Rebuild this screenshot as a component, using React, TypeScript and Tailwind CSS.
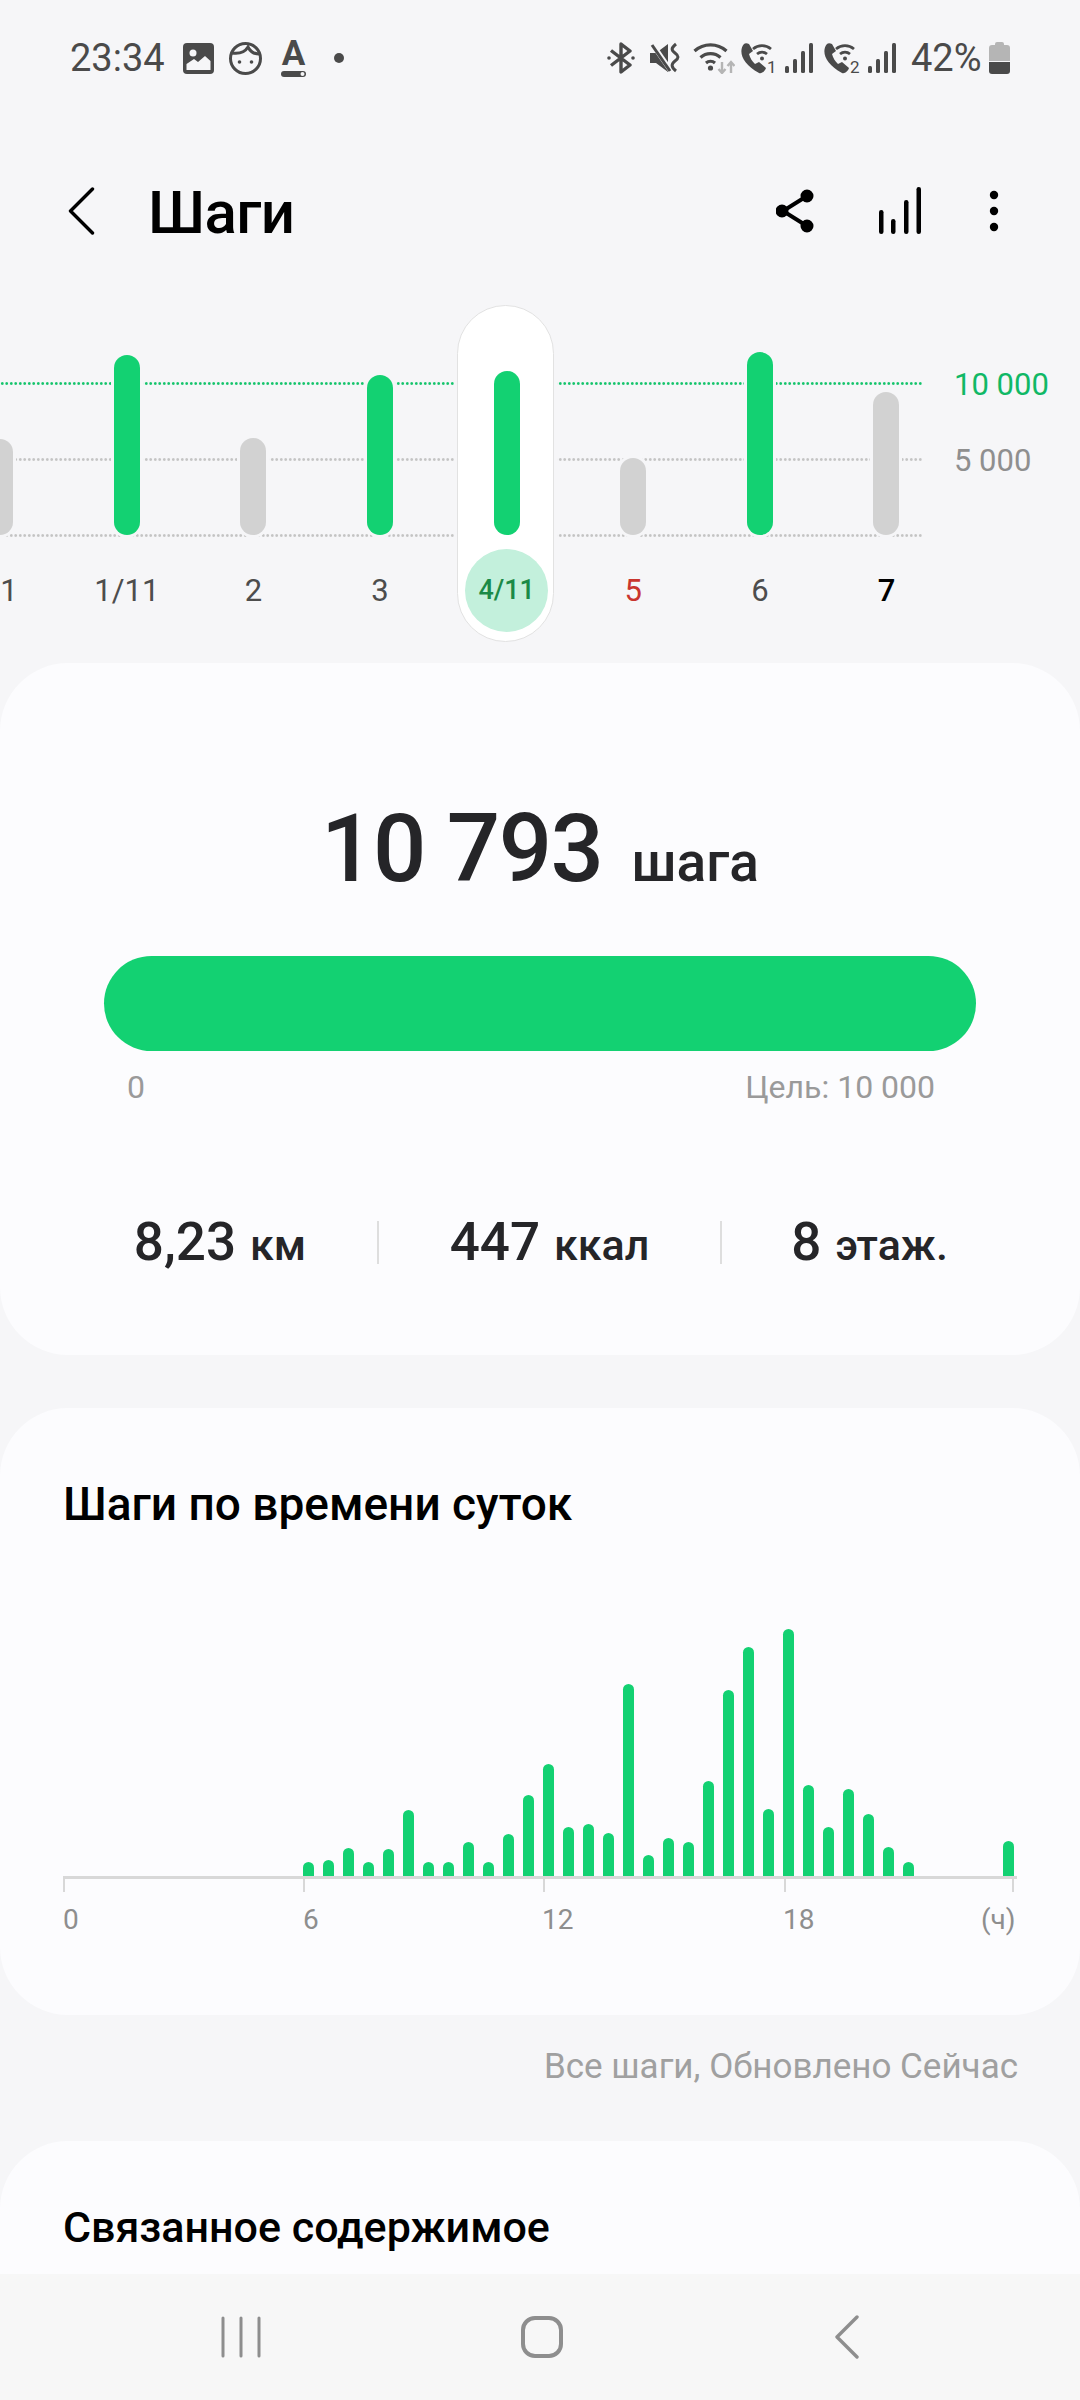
const days = [
  { label: "31", top: 439, green: false, color: "text-[#4d4d4d]" },
  { label: "1/11", top: 355, green: true, color: "text-[#4d4d4d]" },
  { label: "2", top: 438, green: false, color: "text-[#4d4d4d]" },
  { label: "3", top: 375, green: true, color: "text-[#4d4d4d]" },
  { label: "4/11", top: 371, green: true, color: "text-[#1b8a47]", active: true },
  { label: "5", top: 458, green: false, color: "text-[#c9352e]" },
  { label: "6", top: 352, green: true, color: "text-[#4d4d4d]" },
  { label: "7", top: 392, green: false, color: "text-black font-medium" },
];

// heights of the half-hour bars, in px above the axis
const hours = [
  0, 0, 0, 0, 0, 0, 0, 0, 0, 0, 0, 0, 14, 16, 28, 14, 27, 66, 14, 14, 34, 14, 42, 81, 112, 49, 52, 43, 192, 21, 38, 34,
  95, 186, 229, 67, 247, 91, 49, 87, 62, 29, 14, 0, 0, 0, 0, 35,
];

function SignalBars({ className }: { className?: string }) {
  return (
    <svg viewBox="0 0 28 30" className={className} fill="#4a4a4a">
      <rect x="0" y="23" width="4" height="7" rx="1.5" />
      <rect x="8" y="16" width="4" height="14" rx="1.5" />
      <rect x="16" y="8" width="4" height="22" rx="1.5" />
      <rect x="24" y="0" width="4" height="30" rx="1.5" />
    </svg>
  );
}

function CallWifi({ digit }: { digit: string }) {
  return (
    <svg viewBox="0 0 38 37" className="mb-[-5px] mr-[-2px] h-[37px] w-[38px]">
      <path
        d="M4 2 C-2 9 2 22 19 31 C22 32 25 29 26 26 L19 20 L15 22 C12 19 10 16 9 12 L13 9 L9 2 C7 1 5 1 4 2Z"
        fill="#4a4a4a"
      />
      <g fill="none" stroke="#4a4a4a" strokeWidth="2.8">
        <path d="M13 7 A14 14 0 0 1 31 7" />
        <path d="M17 12 A8 8 0 0 1 27 12" />
      </g>
      <circle cx="22" cy="16.5" r="2" fill="#4a4a4a" />
      <text x="27" y="31" fontSize="17" fill="#4a4a4a" fontFamily="Roboto, sans-serif">
        {digit}
      </text>
    </svg>
  );
}

function StatusBar() {
  return (
    <div className="flex h-[116px] shrink-0 items-center pl-[70px] pr-[70px] text-[38px] text-[#4a4a4a]">
      <span className="w-[113px] leading-none">23:34</span>
      <svg viewBox="0 0 31 31" className="h-[31px] w-[31px]">
        <rect width="31" height="31" rx="4" fill="#4a4a4a" />
        <circle cx="10" cy="10" r="3.5" fill="#f6f6f8" />
        <path d="M3.5 27 V21 L11 16 L15 19 L22 13 L27.5 18 V27Z" fill="#f6f6f8" />
      </svg>
      <svg viewBox="0 0 33 33" className="ml-[15px] h-[33px] w-[33px]" fill="none" stroke="#4a4a4a" strokeWidth="3">
        <circle cx="16.5" cy="16.5" r="15" />
        <path d="M3 11 C10 12 16 10 19 5 C21 9 25 12 30 12" />
        <circle cx="10.5" cy="20" r="1.8" fill="#4a4a4a" stroke="none" />
        <circle cx="22.5" cy="20" r="1.8" fill="#4a4a4a" stroke="none" />
      </svg>
      <svg viewBox="-4 -8 33 46" className="ml-[15px] mr-[-4px] mt-[-8px] h-[46px] w-[33px]">
        <text x="12.5" y="26" textAnchor="middle" fontSize="35" fontWeight="700" fill="#4a4a4a" fontFamily="Roboto, sans-serif">
          A
        </text>
        <rect x="0" y="32" width="25" height="6" rx="3" fill="#4a4a4a" />
        <circle cx="21.5" cy="35" r="2" fill="#f6f6f8" />
      </svg>
      <span className="ml-[28px] h-[10px] w-[10px] rounded-full bg-[#4a4a4a]" />

      <div className="ml-auto flex items-center">
        <svg viewBox="0 0 28 32" className="h-[32px] w-[28px]" fill="none" stroke="#4a4a4a" strokeWidth="3.4" strokeLinejoin="round">
          <path d="M4 8.5 L23 23 L14 30 V2 L23 9 L4 23.5" />
          <circle cx="2" cy="16" r="1.8" fill="#4a4a4a" stroke="none" />
          <circle cx="26" cy="16" r="1.8" fill="#4a4a4a" stroke="none" />
        </svg>
        <svg viewBox="0 0 30 32" className="ml-[15px] h-[32px] w-[30px]">
          <path d="M0 11 H6 L18 2 V30 L6 21 H0Z" fill="#4a4a4a" />
          <path d="M1 0 L21 29" stroke="#f6f6f8" strokeWidth="5" />
          <path d="M2 3 L20 29" stroke="#4a4a4a" strokeWidth="3" />
          <path d="M26 2 C21 6 21 8 25 11 C29 14 29 16 25 19 C21 22 21 25 26 29" fill="none" stroke="#4a4a4a" strokeWidth="3" />
        </svg>
        <svg viewBox="0 0 42 32" className="ml-[13px] h-[32px] w-[42px]" fill="none">
          <g stroke="#4a4a4a" strokeWidth="3.2">
            <path d="M1.5 9 A24 24 0 0 1 33.5 9" />
            <path d="M7.5 15.5 A15 15 0 0 1 27.5 15.5" />
            <path d="M13 21 A7 7 0 0 1 22 21" />
          </g>
          <circle cx="17.5" cy="26" r="2.6" fill="#4a4a4a" />
          <path d="M29 20 V31 M25.5 27 L29 31 L32.5 27" stroke="#b5b5b5" strokeWidth="2.4" />
          <path d="M38 31 V20 M34.5 24 L38 20 L41.5 24" stroke="#b5b5b5" strokeWidth="2.4" />
        </svg>
        <span className="ml-[5px] flex">
          <CallWifi digit="1" />
        </span>
        <SignalBars className="ml-[9px] h-[30px] w-[28px]" />
        <span className="ml-[10px] flex">
          <CallWifi digit="2" />
        </span>
        <SignalBars className="ml-[9px] h-[30px] w-[28px]" />
        <span className="ml-[15px] w-[72px] leading-none">42%</span>
        <svg viewBox="0 0 21 32" className="ml-[6px] h-[32px] w-[21px]">
          <path d="M6 2 Q6 0 8 0 H13 Q15 0 15 2 V3 H18 Q21 3 21 6 V19 H0 V6 Q0 3 3 3 H6Z" fill="#b5b5b5" />
          <path d="M0 20 H21 V29 Q21 32 18 32 H3 Q0 32 0 29Z" fill="#4a4a4a" />
        </svg>
      </div>
    </div>
  );
}

function AppBar() {
  return (
    <div className="flex h-[189px] shrink-0 items-center pl-[68px] text-black">
      <svg viewBox="0 0 27 48" className="h-[48px] w-[27px]" fill="none" stroke="#000" strokeWidth="3.4" strokeLinecap="round" strokeLinejoin="round">
        <path d="M24.5 2 L2.5 24 L24.5 46" />
      </svg>
      <h1 className="ml-[53px] mt-[5px] text-[60px] font-medium leading-none tracking-[-0.01em]">Шаги</h1>
      <svg viewBox="0 0 38 44" className="ml-auto h-[44px] w-[38px]" fill="#000" stroke="#000" strokeWidth="4">
        <path d="M31 7 L7 22 L31 37" fill="none" />
        <circle cx="31" cy="7" r="4.5" />
        <circle cx="6" cy="22" r="4.5" />
        <circle cx="31" cy="37" r="4.5" />
      </svg>
      <svg viewBox="0 0 43 47" className="ml-[65px] h-[47px] w-[43px]" fill="#000">
        <rect x="0" y="23" width="4.5" height="24" rx="2.2" />
        <rect x="12" y="32" width="4.5" height="15" rx="2.2" />
        <rect x="25" y="13" width="4.5" height="34" rx="2.2" />
        <rect x="37.5" y="0" width="4.5" height="47" rx="2.2" />
      </svg>
      <svg viewBox="0 0 10 42" className="ml-[67px] mr-[81px] h-[42px] w-[10px]" fill="#000">
        <circle cx="5" cy="5" r="4.2" />
        <circle cx="5" cy="21" r="4.2" />
        <circle cx="5" cy="37" r="4.2" />
      </svg>
    </div>
  );
}

function WeekChart() {
  return (
    <section className="relative h-[358px] shrink-0 overflow-hidden">
      <div className="absolute left-0 top-[77px] h-[3px] w-[923px] bg-[radial-gradient(circle,#14c46c_1.2px,transparent_1.5px)] bg-size-[4.5px_3px]" />
      <div className="absolute left-0 top-[153px] h-[3px] w-[923px] bg-[radial-gradient(circle,#c4c4c4_1.2px,transparent_1.5px)] bg-size-[4.5px_3px]" />
      <div className="absolute left-0 top-[229px] h-[3px] w-[923px] bg-[radial-gradient(circle,#c4c4c4_1.2px,transparent_1.5px)] bg-size-[4.5px_3px]" />
      <span className="absolute left-[954px] top-[62px] text-[31px] leading-[36px] text-[#10b866]">10 000</span>
      <span className="absolute left-[954px] top-[138px] text-[31px] leading-[36px] text-[#8f8f8f]">5 000</span>

      <div className="relative ml-[-63px] flex">
        {days.map((d) => (
          <div key={d.label} className="relative flex w-[126.6px] shrink-0 flex-col items-center">
            {d.active && (
              <div className="absolute left-[14px] top-0 h-[337px] w-[97px] rounded-full border border-[#e2e2e2] bg-white ring-[3px] ring-[#f6f6f8]" />
            )}
            <div className="relative flex h-[230px] items-end">
              <div
                className={`w-[26px] rounded-full ${d.green ? "bg-[#13d172]" : "bg-[#d2d2d2]"} ${d.active ? "" : "ring-[3px] ring-[#f6f6f8]"}`}
                style={{ height: 535 - d.top }}
              />
            </div>
            <div className="relative flex h-[112px] items-center justify-center">
              {d.active ? (
                <span className={`mt-[-2px] flex h-[83px] w-[83px] items-center justify-center rounded-full bg-[#c3f0dc] text-[27px] font-medium ${d.color}`}>
                  {d.label}
                </span>
              ) : (
                <span className={`text-[31px] ${d.color}`}>{d.label}</span>
              )}
            </div>
          </div>
        ))}
      </div>
    </section>
  );
}

function Stat({ value, unit, className }: { value: string; unit: string; className: string }) {
  return (
    <div className={`flex items-baseline justify-center gap-[14px] ${className}`}>
      <span className="text-[53px] font-medium">{value}</span>
      <span className="text-[43px] font-medium">{unit}</span>
    </div>
  );
}

function StepsCard() {
  return (
    <section className="mb-[53px] h-[692px] shrink-0 rounded-[68px] bg-[#fcfcfe] pt-[131px] text-[#252528]">
      <div className="flex h-[110px] items-baseline justify-center gap-[29px] leading-[110px]">
        <span className="text-[94px] font-medium tracking-[-1.5px]">10 793</span>
        <span className="text-[55px] font-medium">шага</span>
      </div>
      <div className="mx-[104px] mt-[52px] h-[95px] rounded-full bg-[#13d172]" />
      <div className="mx-[104px] mt-[16px] flex h-[40px] items-center justify-between pl-[23px] pr-[41px] text-[32px] text-[#9a9a9a]">
        <span>0</span>
        <span>Цель: 10 000</span>
      </div>
      <div className="mt-[96px] flex items-center px-[63px]">
        <Stat value="8,23" unit="км" className="w-[314px]" />
        <div className="h-[43px] w-[2px] shrink-0 bg-[#dedede]" />
        <Stat value="447" unit="ккал" className="w-[341px]" />
        <div className="h-[43px] w-[2px] shrink-0 bg-[#dedede]" />
        <Stat value="8" unit="этаж." className="w-[295px]" />
      </div>
    </section>
  );
}

function HoursCard() {
  return (
    <section className="h-[607px] shrink-0 rounded-[68px] bg-[#fcfcfe] px-[63px] pt-[71px]">
      <h2 className="h-[50px] whitespace-nowrap text-[46px] font-medium leading-[50px] text-black">Шаги по времени суток</h2>
      <div className="mt-[9px] flex h-[338px] items-end gap-[9px]">
        {hours.map((h, i) => (
          <div key={i} className="w-[11px] shrink-0 rounded-t-full bg-[#13d172]" style={{ height: h }} />
        ))}
      </div>
      <div className="flex h-[16px] border-t-[3px] border-[#d8d8d8]">
        <div className="w-[240px] border-l-2 border-[#d8d8d8]" />
        <div className="w-[240px] border-l-2 border-[#d8d8d8]" />
        <div className="w-[241px] border-l-2 border-[#d8d8d8]" />
        <div className="w-[230px] border-x-2 border-[#d8d8d8]" />
      </div>
      <div className="mt-[8px] flex h-[40px] items-center text-[28px] text-[#8e8e8e]">
        <span className="w-[240px]">0</span>
        <span className="w-[239px]">6</span>
        <span className="w-[241px]">12</span>
        <span className="w-[198px]">18</span>
        <span>(ч)</span>
      </div>
    </section>
  );
}

function NavBar() {
  return (
    <nav className="flex h-[126px] shrink-0 items-center bg-[#f7f7f7] pl-[221px]">
      <svg viewBox="0 0 40 42" className="h-[42px] w-[40px]" stroke="#8e8e8e" strokeWidth="3" strokeLinecap="round">
        <path d="M2 2 V40 M20 2 V40 M38 2 V40" />
      </svg>
      <svg viewBox="0 0 42 42" className="ml-[260px] h-[42px] w-[42px]" fill="none" stroke="#8e8e8e" strokeWidth="4">
        <rect x="2" y="2" width="38" height="38" rx="12" />
      </svg>
      <svg viewBox="0 0 24 44" className="ml-[272px] h-[44px] w-[24px]" fill="none" stroke="#8e8e8e" strokeWidth="3.4" strokeLinecap="round" strokeLinejoin="round">
        <path d="M22 2 L2 22 L22 42" />
      </svg>
    </nav>
  );
}

export default function App() {
  return (
    <div className="flex h-[2400px] w-[1080px] flex-col overflow-hidden bg-[#f6f6f8] font-[Roboto,sans-serif]">
      <StatusBar />
      <AppBar />
      <WeekChart />
      <main className="min-h-0 flex-1 overflow-hidden">
        <StepsCard />
        <HoursCard />
        <p className="flex h-[126px] items-start justify-end pr-[62px] pt-[32px] text-[35px] leading-[40px] text-[#a0a0a0]">
          Все шаги, Обновлено Сейчас
        </p>
        <section className="h-[200px] rounded-t-[68px] bg-[#fcfcfe] px-[63px] pt-[61px]">
          <h2 className="text-[43px] font-medium leading-[50px] text-black">Связанное содержимое</h2>
        </section>
      </main>
      <NavBar />
    </div>
  );
}
